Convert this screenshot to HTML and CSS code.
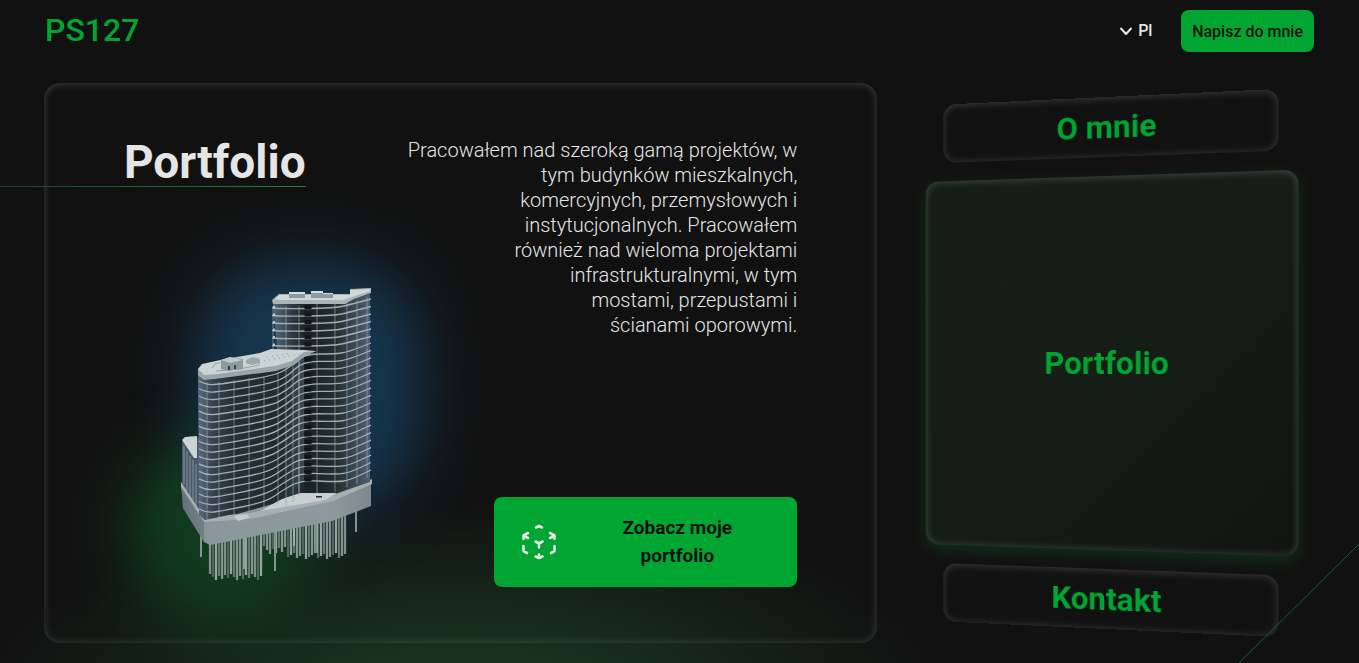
FILE: index.html
```html
<!DOCTYPE html>
<html lang="pl">
<head>
<meta charset="utf-8">
<meta name="viewport" content="width=device-width, initial-scale=1">
<title>PS127 – Portfolio</title>
<link rel="stylesheet" href="styles.css">
</head>
<body>
<div class="page">
  <header class="header">
    <a class="logo" href="#">PS127</a>
    <div class="actions">
      <label class="lang">
        <svg class="chevron" viewBox="0 0 14 14" aria-hidden="true"><path d="M2 4.500 7 10l5-5.500"/></svg>
        <select class="lang-select" aria-label="Język"><option>Pl</option></select>
      </label>
      <button class="btn btn-contact" type="button">Napisz do mnie</button>
    </div>
  </header>

  <main class="main">
    <section class="card">
      <div class="col-left">
        <h1 class="title">Portfolio</h1>
        <div class="art">
          <svg class="building" viewBox="180 285 195 300" role="img" aria-label="Model budynku">
            <defs>
              <linearGradient id="front" x1="0" x2="1" y1="0" y2="0">
                <stop offset="0" stop-color="#596c80"/><stop offset=".14" stop-color="#36434e"/>
                <stop offset=".35" stop-color="#252e33"/><stop offset=".8" stop-color="#232b2f"/><stop offset="1" stop-color="#3b4953"/>
              </linearGradient>
              <linearGradient id="back" x1="0" x2="1" y1="0" y2="0">
                <stop offset="0" stop-color="#56687b"/><stop offset=".2" stop-color="#2e3940"/>
                <stop offset=".35" stop-color="#1a2124"/><stop offset=".65" stop-color="#262e2e"/><stop offset="1" stop-color="#4c6074"/>
              </linearGradient>
              <linearGradient id="base" x1="0" x2="1" y1="0" y2="0">
                <stop offset="0" stop-color="#687780"/><stop offset=".14" stop-color="#8a979c"/><stop offset=".8" stop-color="#8d999c"/><stop offset="1" stop-color="#7d898c"/>
              </linearGradient>
            </defs>
            <g id="piles"></g>
            <path fill="#485866" d="M182 442 190 436 199 438V518L182 488Z"/>
            <path fill="#cbd4d5" d="M182 440 185 437 197 436V458H194Z"/>
            <path stroke="#8495a1" d="M184 446V484M187 451V491M190 456V496M193 460V503M196 464V508" fill="none"/>
            <path fill="url(#base)" d="M181 482 203 516H230L370 477V482L371 483V506L332 521 210 545 204 542 183 508Z"/>
            <path fill="#a5b0b2" d="M181 482 204 517 250 513 332 496 372 479V484L333 501 250 519 204 522 181 488Z"/>
            <path fill="#5d6c76" d="M181 486 204 522V542L183 508Z" opacity=".5"/>
            <path fill="url(#back)" d="M273 303H335L348 300 370 294V482L335 494H290Z"/>
            <path fill="#c8d0cf" d="M260 511 282 499 300 493H337L325 500 290 506Z"/>
            <path fill="url(#front)" d="M198 374 206 380 270 371 292 364 304 353V480L284 498 258 508 224 516 205 520 199 515Z"/>
            <path stroke="#9aa7ab" stroke-width="1" d="M207 382V520M219 382V518M234 380V515M249 378V512M264 376V508M278 372V504M286 370V506M293 366V502M299 361V495M273 306V349M286 306V349M299 306V492M317 304V493M335 304V492M347 303V487M357 300V484M367 297V478" fill="none" opacity=".65"/>
            <g id="floors" fill="none" stroke-linejoin="round"></g>
            <path stroke="#121618" stroke-width="7" stroke-dasharray="4 3.500" d="M308 305V482" fill="none"/>
            <path fill="#cbd3d4" d="M198 369 202 364 225 359 260 353 271 349 304 350 316 351 304 356 294 364 276 370 215 378 204 379 198 375Z"/>
            <path fill="#98a6aa" d="M198 369 204 375 218 374 275 366 292 361 304 352 316 351 304 357 294 365 276 371 215 379 204 380 198 375Z"/>
            <path fill="none" stroke="#98a4a7" d="M212 368 215 364 234 359M216 371 240 369 259 365V361"/>
            <path fill="#8d9a9d" d="M221 360 230 357 243 359V369L228 371 221 369Z"/>
            <path fill="#bfc8c9" d="M221 360 230 357 243 360 230 363Z"/>
            <path fill="#9ca7aa" d="M246 360 253 357 260 359V363L251 365 246 363Z"/>
            <path fill="#3a4446" d="M228 366h2v4h-2zM234 365h2v4h-2z"/>
            <path stroke="#87979d" stroke-dasharray="1 4" d="M264 361 300 354M267 357 292 353" fill="none"/>
            <path fill="#a9b4b6" d="M272 300 279 294H350V289L371 288 371 293 354 299 345 304H279L273 304Z"/>
            <path fill="#d0d8d8" d="M274 299 280 295H350V290L370 289V291L343 300H280Z"/>
            <path fill="#8d9a9e" d="M289 292h16v6h-16zM311 292h12v6h-12zM323 293h10v5h-10z"/>
            <path fill="#d7dedd" d="M289 292h16v2h-16zM311 291h12v2h-12zM323 293h10v1h-10z"/>
            <path stroke="#e4e9e9" stroke-dasharray="2 5.500" stroke-width="1.500" d="M274 306V348"/>
            <path fill="#c5cdce" d="M234 516 247 514 250 518 238 521Z"/>
            <path fill="#8e9a9d" d="M238 521 250 518V520L240 523Z"/>
            <path fill="#1e2628" d="M316 496h6v1.500h-6z"/>
          </svg>
        </div>
      </div>
      <div class="col-right">
        <p class="text">Pracowałem nad szeroką gamą projektów, w<br>tym budynków mieszkalnych,<br>komercyjnych, przemysłowych i<br>instytucjonalnych. Pracowałem<br>również nad wieloma projektami<br>infrastrukturalnymi, w tym<br>mostami, przepustami i<br>ścianami oporowymi.</p>
        <button class="btn btn-main" type="button">
          <svg class="cube" viewBox="0 0 36 36" aria-hidden="true"><path d="M15 3.500 18 2l3 1.500M7 9l-4.500 2.500V15M3 12l4 2M29 9l4.500 2.500V15M33 12l-4 2M2.500 22v5L6 29M33.500 22v5L30 29M14.500 17.500 18 19.500l3.500-2M18 20v3.500M14.500 32.500 18 34l3.500-1.500M18 30.500V34"/></svg>
          <span class="btn-label">Zobacz moje portfolio</span>
        </button>
      </div>
    </section>

    <nav class="scene" aria-label="Sekcje">
      <div class="panels">
        <a class="panel" href="#about">O mnie</a>
        <a class="panel panel-active" href="#portfolio">Portfolio</a>
        <a class="panel" href="#contact">Kontakt</a>
      </div>
    </nav>
  </main>
  <svg class="diagonal" viewBox="0 0 120 119" aria-hidden="true"><path d="M0 119 120 0"/></svg>
</div>
<script src="building.js"></script>
</body>
</html>
```
FILE: styles.css
```css
* { box-sizing: border-box; }
body {
  margin: 0;
  background: #111;
  color: #e5e5e5;
  font-family: Roboto, "Liberation Sans", sans-serif;
}
a { text-decoration: none; }
.page {
  position: relative;
  min-height: 100vh;
  display: flex;
  flex-direction: column;
  overflow: hidden;
  background: radial-gradient(ellipse 480px 200px at 34% 106%, #1b3a23 0%, #162a1c 45%, rgba(17, 17, 17, 0) 100%);
}
.header {
  display: flex;
  justify-content: space-between;
  align-items: flex-start;
  padding: 10px 45px 31px 45px;
}
.logo {
  color: #00a631;
  font-size: 32px;
  line-height: 40px;
  font-weight: 500;
}
.actions { display: flex; align-items: center; gap: 28px; }
.lang { display: flex; align-items: center; gap: 5px; }
.chevron {
  width: 14px;
  height: 14px;
  fill: none;
  stroke: #e5e5e5;
  stroke-width: 2;
  stroke-linecap: round;
  stroke-linejoin: round;
}
.lang-select {
  appearance: none;
  border: 0;
  padding: 0;
  background: transparent;
  color: #e5e5e5;
  font: 500 16px/24px Roboto, sans-serif;
}
.btn {
  border: 0;
  border-radius: 8px;
  background: #00a631;
  color: #111;
  font-family: inherit;
}
.btn-contact { height: 42px; padding: 0 11px; font-size: 16px; font-weight: 500; }
.main {
  flex: 1;
  display: grid;
  grid-template-columns: 2fr 1fr;
  gap: 20px;
  padding: 0 45px 20px 44px;
}
.card {
  display: grid;
  grid-template-columns: auto 1fr;
  padding: 54px 80px 56px;
  border-radius: 16px;
  box-shadow: inset 0 0 8px rgba(255, 255, 255, .13), inset 0 2px 8px rgba(255, 255, 255, .08);
}
.col-left { display: flex; flex-direction: column; align-items: flex-start; }
.title {
  position: relative;
  margin: 0;
  font-size: 46px;
  line-height: 50px;
  font-weight: 700;
}
.title::after {
  content: "";
  position: absolute;
  right: 0;
  bottom: 0;
  width: 100vw;
  height: 1px;
  background: linear-gradient(to left, #22803c, #18472a 300px, transparent);
}
.art { position: relative; margin: 98px 0 0 56px; }
.art::before, .art::after {
  content: "";
  position: absolute;
  border-radius: 50%;
  filter: blur(32px);
}
.art::before {
  left: 16px;
  top: -26px;
  width: 226px;
  height: 266px;
  border-radius: 90px 90px 110px 60px;
  background: #17405f;
  opacity: .8;
}
.art::after { left: -56px; top: 154px; width: 190px; height: 180px; background: #104a20; opacity: .75; }
.building { position: relative; z-index: 1; display: block; width: 195px; height: 300px; }
.col-right {
  display: flex;
  flex-direction: column;
  align-items: flex-end;
  justify-content: space-between;
  position: relative;
  z-index: 1;
}
.text {
  margin: 0;
  padding-top: 1px;
  font-size: 20px;
  line-height: 25px;
  font-weight: 300;
  text-align: right;
  white-space: nowrap;
}
.btn-main {
  width: 303px;
  height: 90px;
  display: flex;
  align-items: center;
  gap: 28px;
  padding: 0 28px 0 27px;
  font-size: 19px;
  line-height: 28px;
  font-weight: 700;
}
.btn-label { flex: 1; padding: 0 32px; }
.cube {
  flex: none;
  width: 36px;
  height: 36px;
  fill: none;
  stroke: #e5e5e5;
  stroke-width: 2.600;
  stroke-linecap: round;
  stroke-linejoin: round;
}
.scene {
  display: flex;
  align-items: center;
  justify-content: center;
  perspective: 1000px;
}
.panels {
  width: 378px;
  max-width: 100%;
  display: flex;
  flex-direction: column;
  align-items: center;
  gap: 19px;
  transform: rotateY(-10deg);
}
.panel {
  width: 90%;
  height: 60px;
  display: flex;
  align-items: center;
  justify-content: center;
  border-radius: 14px;
  color: #00a631;
  font-size: 32px;
  font-weight: 700;
  box-shadow: inset 0 0 8px rgba(255, 255, 255, .13), inset 0 2px 8px rgba(255, 255, 255, .08);
}
.panel-active {
  width: 100%;
  height: 374px;
  background: linear-gradient(135deg, #151d17 0%, #141e17 50%, #111411 100%);
  box-shadow: inset 0 0 8px rgba(255, 255, 255, .15), inset 0 2px 8px rgba(255, 255, 255, .08), 0 5px 14px rgba(0, 166, 49, .2);
}
.diagonal {
  position: absolute;
  right: 0;
  bottom: 0;
  width: 120px;
  height: 119px;
  fill: none;
  stroke: #1b5a2e;
  stroke-width: 1;
  pointer-events: none;
}
```
FILE: building.js
```js
const NS = "http://www.w3.org/2000/svg";

function addPath(parent, d, stroke, width) {
  const p = document.createElementNS(NS, "path");
  p.setAttribute("d", d);
  p.setAttribute("stroke", stroke);
  p.setAttribute("stroke-width", width);
  p.setAttribute("fill", "none");
  parent.appendChild(p);
}

// Floor slabs: each one is interpolated between the top and the bottom outline.
const floors = document.getElementById("floors");
const top0 = [[199,381],[206,385],[222,384],[272,376],[288,369],[303,354],[335,354],[348,352],[371,343]];
const bottom0 = [[199,509],[206,513],[222,511],[266,502],[283,490],[301,480],[337,482],[350,480],[371,470]];
const toPath = pts => {
  let d = "M" + pts[0];
  for (let i = 1; i < pts.length - 1; i++) {
    const mid = [(pts[i][0] + pts[i + 1][0]) / 2, (pts[i][1] + pts[i + 1][1]) / 2];
    d += "Q" + pts[i] + " " + mid;
  }
  return d + "L" + pts[pts.length - 1];
};
for (let n = 0; n < 6; n++) {
  const y = 308 + n * 7.5;
  const d = toPath([[272,y],[280,y+1],[335,y],[348,y-3],[371,y-9]]);
  addPath(floors, d, "#a3afb4", 1.3);
}
for (let n = 0; n <= 17; n++) {
  const t = n / 17;
  const pts = top0.map((p, i) => [p[0] + (bottom0[i][0] - p[0]) * t, p[1] + (bottom0[i][1] - p[1]) * t]);
  addPath(floors, toPath(pts), "#a3afb4", 1.3);
}

// Foundation piles in three groups, with staggered lengths.
const piles = document.getElementById("piles");
const shades = ["#7f8f90", "#53645f", "#94a3a3", "#66786f", "#85938f"];
for (let x = 210, i = 0; x <= 346; x += 3, i++) {
  let end = 553 + (i * 5) % 7;
  if (x < 262) end = 574 + (i * 3) % 7;
  else if (x < 288) end = 546 + (i * 4) % 9;
  addPath(piles, `M${x} 515V${end}`, shades[i % 5], 2.3);
}
addPath(piles, "M201 530V557M275 530V571M356 510V532", "#84938f", 2);
addPath(piles, "M244 530V569M294 520V546M317 520V553", "#dbe5df", 1);
```
